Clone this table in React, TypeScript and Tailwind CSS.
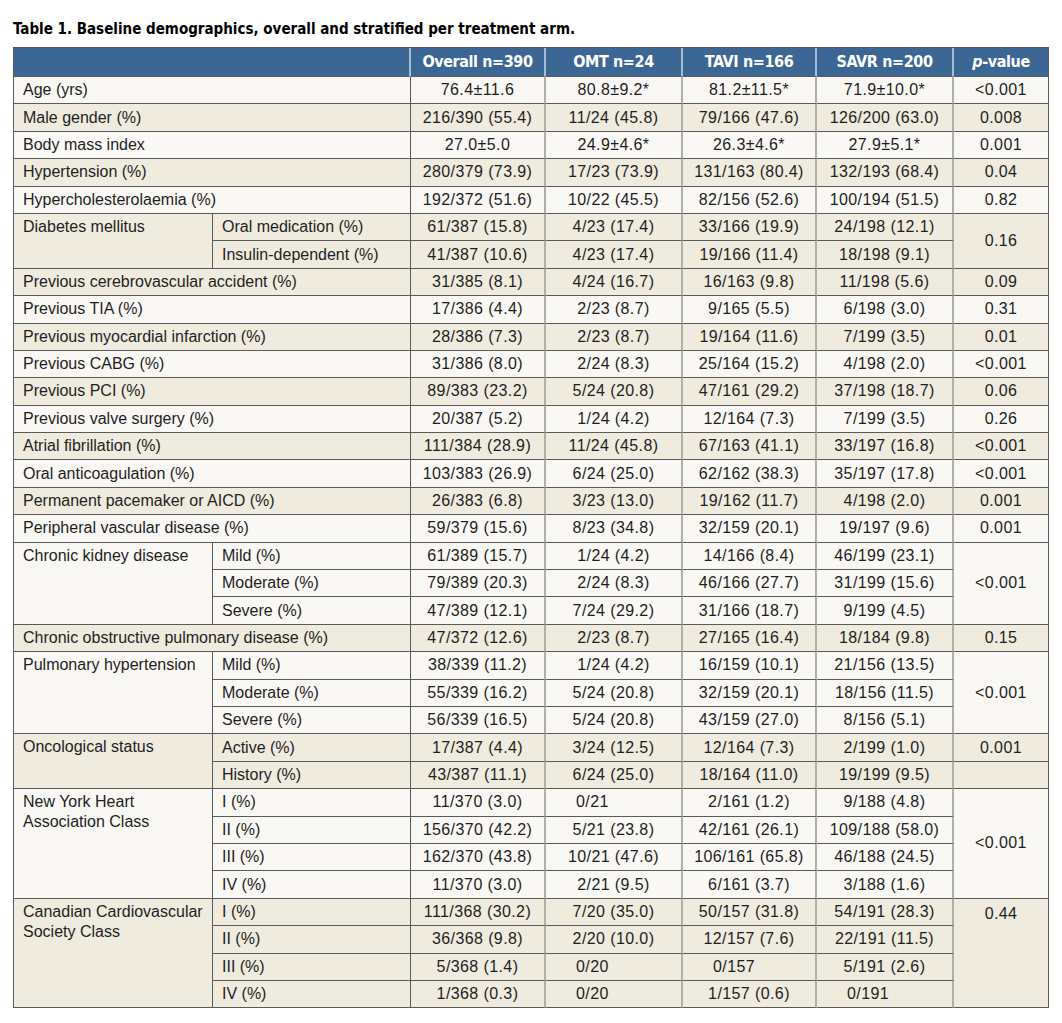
import React from 'react'

type Line = { sub?: string; v: string[]; p?: string }
type Group = { label: string; beige: boolean; rows: Line[]; p?: string; pTop?: boolean }

const groups: Group[] = [
  { label: 'Age (yrs)', beige: false, rows: [{ v: ['76.4±11.6', '80.8±9.2*', '81.2±11.5*', '71.9±10.0*'], p: '<0.001' }] },
  { label: 'Male gender (%)', beige: true, rows: [{ v: ['216/390 (55.4)', '11/24 (45.8)', '79/166 (47.6)', '126/200 (63.0)'], p: '0.008' }] },
  { label: 'Body mass index', beige: false, rows: [{ v: ['27.0±5.0', '24.9±4.6*', '26.3±4.6*', '27.9±5.1*'], p: '0.001' }] },
  { label: 'Hypertension (%)', beige: true, rows: [{ v: ['280/379 (73.9)', '17/23 (73.9)', '131/163 (80.4)', '132/193 (68.4)'], p: '0.04' }] },
  { label: 'Hypercholesterolaemia (%)', beige: false, rows: [{ v: ['192/372 (51.6)', '10/22 (45.5)', '82/156 (52.6)', '100/194 (51.5)'], p: '0.82' }] },
  {
    label: 'Diabetes mellitus',
    beige: true,
    p: '0.16',
    rows: [
      { sub: 'Oral medication (%)', v: ['61/387 (15.8)', '4/23 (17.4)', '33/166 (19.9)', '24/198 (12.1)'] },
      { sub: 'Insulin-dependent (%)', v: ['41/387 (10.6)', '4/23 (17.4)', '19/166 (11.4)', '18/198 (9.1)'] },
    ],
  },
  { label: 'Previous cerebrovascular accident (%)', beige: true, rows: [{ v: ['31/385 (8.1)', '4/24 (16.7)', '16/163 (9.8)', '11/198 (5.6)'], p: '0.09' }] },
  { label: 'Previous TIA (%)', beige: false, rows: [{ v: ['17/386 (4.4)', '2/23 (8.7)', '9/165 (5.5)', '6/198 (3.0)'], p: '0.31' }] },
  { label: 'Previous myocardial infarction (%)', beige: true, rows: [{ v: ['28/386 (7.3)', '2/23 (8.7)', '19/164 (11.6)', '7/199 (3.5)'], p: '0.01' }] },
  { label: 'Previous CABG (%)', beige: false, rows: [{ v: ['31/386 (8.0)', '2/24 (8.3)', '25/164 (15.2)', '4/198 (2.0)'], p: '<0.001' }] },
  { label: 'Previous PCI (%)', beige: true, rows: [{ v: ['89/383 (23.2)', '5/24 (20.8)', '47/161 (29.2)', '37/198 (18.7)'], p: '0.06' }] },
  { label: 'Previous valve surgery (%)', beige: false, rows: [{ v: ['20/387 (5.2)', '1/24 (4.2)', '12/164 (7.3)', '7/199 (3.5)'], p: '0.26' }] },
  { label: 'Atrial fibrillation (%)', beige: true, rows: [{ v: ['111/384 (28.9)', '11/24 (45.8)', '67/163 (41.1)', '33/197 (16.8)'], p: '<0.001' }] },
  { label: 'Oral anticoagulation (%)', beige: false, rows: [{ v: ['103/383 (26.9)', '6/24 (25.0)', '62/162 (38.3)', '35/197 (17.8)'], p: '<0.001' }] },
  { label: 'Permanent pacemaker or AICD (%)', beige: true, rows: [{ v: ['26/383 (6.8)', '3/23 (13.0)', '19/162 (11.7)', '4/198 (2.0)'], p: '0.001' }] },
  { label: 'Peripheral vascular disease (%)', beige: false, rows: [{ v: ['59/379 (15.6)', '8/23 (34.8)', '32/159 (20.1)', '19/197 (9.6)'], p: '0.001' }] },
  {
    label: 'Chronic kidney disease',
    beige: false,
    p: '<0.001',
    rows: [
      { sub: 'Mild (%)', v: ['61/389 (15.7)', '1/24 (4.2)', '14/166 (8.4)', '46/199 (23.1)'] },
      { sub: 'Moderate (%)', v: ['79/389 (20.3)', '2/24 (8.3)', '46/166 (27.7)', '31/199 (15.6)'] },
      { sub: 'Severe (%)', v: ['47/389 (12.1)', '7/24 (29.2)', '31/166 (18.7)', '9/199 (4.5)'] },
    ],
  },
  { label: 'Chronic obstructive pulmonary disease (%)', beige: true, rows: [{ v: ['47/372 (12.6)', '2/23 (8.7)', '27/165 (16.4)', '18/184 (9.8)'], p: '0.15' }] },
  {
    label: 'Pulmonary hypertension',
    beige: false,
    p: '<0.001',
    rows: [
      { sub: 'Mild (%)', v: ['38/339 (11.2)', '1/24 (4.2)', '16/159 (10.1)', '21/156 (13.5)'] },
      { sub: 'Moderate (%)', v: ['55/339 (16.2)', '5/24 (20.8)', '32/159 (20.1)', '18/156 (11.5)'] },
      { sub: 'Severe (%)', v: ['56/339 (16.5)', '5/24 (20.8)', '43/159 (27.0)', '8/156 (5.1)'] },
    ],
  },
  {
    label: 'Oncological status',
    beige: true,
    rows: [
      { sub: 'Active (%)', v: ['17/387 (4.4)', '3/24 (12.5)', '12/164 (7.3)', '2/199 (1.0)'], p: '0.001' },
      { sub: 'History (%)', v: ['43/387 (11.1)', '6/24 (25.0)', '18/164 (11.0)', '19/199 (9.5)'], p: '' },
    ],
  },
  {
    label: 'New York Heart Association Class',
    beige: false,
    p: '<0.001',
    rows: [
      { sub: 'I (%)', v: ['11/370 (3.0)', '0/21', '2/161 (1.2)', '9/188 (4.8)'] },
      { sub: 'II (%)', v: ['156/370 (42.2)', '5/21 (23.8)', '42/161 (26.1)', '109/188 (58.0)'] },
      { sub: 'III (%)', v: ['162/370 (43.8)', '10/21 (47.6)', '106/161 (65.8)', '46/188 (24.5)'] },
      { sub: 'IV (%)', v: ['11/370 (3.0)', '2/21 (9.5)', '6/161 (3.7)', '3/188 (1.6)'] },
    ],
  },
  {
    label: 'Canadian Cardiovascular Society Class',
    beige: true,
    p: '0.44',
    pTop: true,
    rows: [
      { sub: 'I (%)', v: ['111/368 (30.2)', '7/20 (35.0)', '50/157 (31.8)', '54/191 (28.3)'] },
      { sub: 'II (%)', v: ['36/368 (9.8)', '2/20 (10.0)', '12/157 (7.6)', '22/191 (11.5)'] },
      { sub: 'III (%)', v: ['5/368 (1.4)', '0/20', '0/157', '5/191 (2.6)'] },
      { sub: 'IV (%)', v: ['1/368 (0.3)', '0/20', '1/157 (0.6)', '0/191'] },
    ],
  },
]

// condensed bold for the caption and the blue header row
const head = "font-['DejaVu_Sans_Condensed','DejaVu_Sans',sans-serif] font-bold"
const th = 'border-b border-r-2 border-b-[#5a5a5a] border-r-[#a9bcd2] font-bold tracking-[-0.4px]'

export default function App() {
  return (
    <div className="min-h-screen bg-white font-['Liberation_Sans',Arial,sans-serif] text-[16px] text-[#1e1e1e]">
      <div className="px-[13px] pt-[19px]">
        <h1 className={`${head} text-[15px] leading-[20px] text-black`}>
          Table 1. Baseline demographics, overall and stratified per treatment arm.
        </h1>
        <table className="mt-[8px] w-[1035px] table-fixed border-separate border-spacing-0 border-l border-t border-[#5a5a5a]">
          <colgroup>
            <col className="w-[199px]" />
            <col className="w-[198px]" />
            <col className="w-[135px]" />
            <col className="w-[137px]" />
            <col className="w-[134px]" />
            <col className="w-[137px]" />
            <col className="w-[95px]" />
          </colgroup>
          <thead>
            <tr className={`h-[29px] bg-[#3c6794] text-[16px] text-white ${head}`}>
              <th colSpan={2} className={th} />
              <th className={th}>Overall n=390</th>
              <th className={th}>OMT n=24</th>
              <th className={th}>TAVI n=166</th>
              <th className={th}>SAVR n=200</th>
              <th className="border-b border-r border-[#5a5a5a] font-bold tracking-[-0.4px]">
                <i>p</i>-value
              </th>
            </tr>
          </thead>
          <tbody>
            {groups.map(g => {
              const bg = g.beige ? 'bg-[#efebdf]' : 'bg-[#f9f8f4]'
              const n = g.rows.length
              return g.rows.map((r, i) => (
                <tr key={g.label + i} className={`h-[27.4px] ${bg}`}>
                  {i === 0 && (
                    <td
                      colSpan={r.sub ? 1 : 2}
                      rowSpan={r.sub ? n : 1}
                      className={`border-b border-r border-[#5a5a5a] pl-[9px] pr-1 leading-[20px] ${r.sub ? 'pt-[3px] align-top' : 'align-middle'}`}
                    >
                      {g.label}
                    </td>
                  )}
                  {r.sub && <td className="border-b border-r border-[#5a5a5a] pl-[9px]">{r.sub}</td>}
                  {r.v.map((v, j) => (
                    <td
                      key={j}
                      className={`border-b border-r-2 border-b-[#5a5a5a] border-r-[#b0b0ab] tracking-[0.4px] ${
                        v.startsWith('0/') ? 'pl-[30px] text-left' : 'text-center'
                      }`}
                    >
                      {v}
                    </td>
                  ))}
                  {g.p !== undefined
                    ? i === 0 && (
                        <td
                          rowSpan={n}
                          className={`border-b border-r border-[#5a5a5a] text-center tracking-[0.4px] ${g.pTop ? 'pt-[3px] align-top' : 'align-middle'}`}
                        >
                          {g.p}
                        </td>
                      )
                    : <td className="border-b border-r border-[#5a5a5a] text-center tracking-[0.4px]">{r.p}</td>}
                </tr>
              ))
            })}
          </tbody>
        </table>
      </div>
    </div>
  )
}
